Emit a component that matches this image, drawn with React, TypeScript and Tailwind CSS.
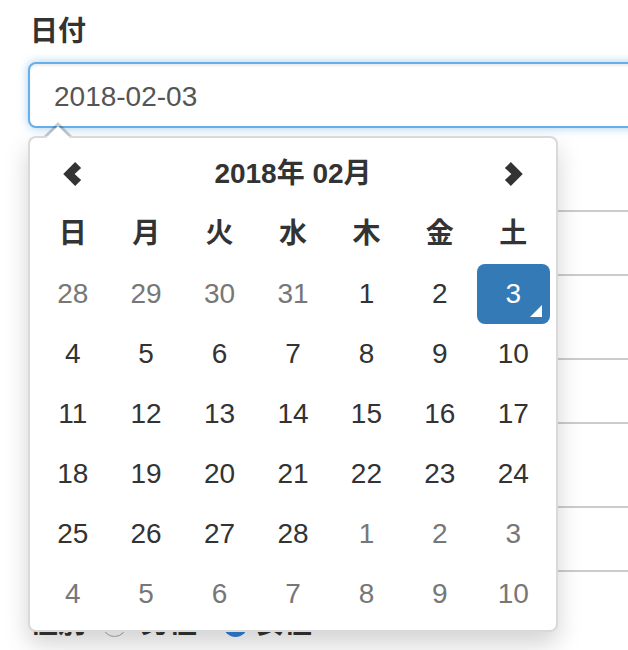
import React from "react";

type Day = { n: number; muted?: boolean; active?: boolean };

const weekdays = ["日", "月", "火", "水", "木", "金", "土"];

function buildDays(): Day[] {
    const days: Day[] = [];
    [28, 29, 30, 31].forEach((n) => days.push({ n, muted: true }));
    for (let n = 1; n <= 28; n++) days.push({ n, active: n === 3 });
    for (let n = 1; n <= 10; n++) days.push({ n, muted: true });
    return days;
}

function Chevron({ dir }: { dir: "left" | "right" }) {
    return (
        <svg
            width="22"
            height="26"
            viewBox="0 0 20 24"
            className={dir === "right" ? "-scale-x-100" : ""}
        >
            <polygon points="12,1 17.5,6.5 11.5,12 17.5,17.5 12,23 1,12" fill="#333333" />
        </svg>
    );
}

function FieldGroup({ children }: { children?: React.ReactNode }) {
    return (
        <div className="mb-[32px]">
            <div className="h-[40px] mb-[10px] text-[28px] leading-[40px] font-bold text-[#333]">
                {children}
            </div>
            <div className="h-[66px] w-[700px] rounded-[8px] border-2 border-[#cccccc] bg-white" />
        </div>
    );
}

function DatePicker() {
    const days = buildDays();
    return (
        <div className="absolute left-[28px] top-[136px] w-[530px] rounded-[8px] border-2 border-[rgba(0,0,0,0.15)] bg-white p-[6px] shadow-[0_12px_24px_rgba(0,0,0,0.175)]">
            {/* caret */}
            <div className="absolute -top-[16px] left-[14px] h-0 w-0 border-x-[14px] border-b-[14px] border-x-transparent border-b-[rgba(0,0,0,0.2)]" />
            <div className="absolute -top-[12px] left-[16px] h-0 w-0 border-x-[12px] border-b-[12px] border-x-transparent border-b-white" />

            <div className="grid grid-cols-7 text-[#333]">
                <div className="h-[60px] flex items-center justify-center">
                    <Chevron dir="left" />
                </div>
                <div className="col-span-5 h-[60px] flex items-center justify-center text-[28px] font-bold">
                    2018年 02月
                </div>
                <div className="h-[60px] flex items-center justify-center">
                    <Chevron dir="right" />
                </div>

                {weekdays.map((w) => (
                    <div key={w} className="h-[60px] flex items-center justify-center text-[28px] font-bold">
                        {w}
                    </div>
                ))}

                {days.map((d, i) => (
                    <div
                        key={i}
                        className={`relative h-[60px] flex items-center justify-center rounded-[8px] text-[28px] ${
                            d.active
                                ? "bg-[#337ab7] text-white"
                                : d.muted
                                ? "text-[#777777]"
                                : "text-[#333333]"
                        }`}
                    >
                        {d.n}
                        {d.active && (
                            <span className="absolute bottom-[7px] right-[8px] h-0 w-0 border-l-[12px] border-b-[12px] border-l-transparent border-b-white" />
                        )}
                    </div>
                ))}
            </div>
        </div>
    );
}

export default function App() {
    return (
        <div className="relative h-[650px] w-[628px] overflow-hidden bg-white pl-[28px] pt-[12px] font-['Liberation_Sans','Noto_Sans_CJK_JP',sans-serif]">
            <div className="mb-[32px]">
                <div className="h-[40px] mb-[10px] pl-[2px] text-[28px] leading-[40px] font-bold text-[#333]">
                    日付
                </div>
                <div className="flex h-[66px] w-[700px] items-center rounded-[8px] border-2 border-[#66afe9] bg-white pl-[24px] pt-[3px] text-[28px] text-[#555555] shadow-[inset_0_2px_2px_rgba(0,0,0,0.075),0_0_10px_rgba(102,175,233,0.6)]">
                    2018-02-03
                </div>
            </div>
            <FieldGroup />
            <FieldGroup />
            <FieldGroup />

            <div className="flex h-[40px] items-center text-[28px] font-bold text-[#333]">
                <span className="pl-[2px]">性別</span>
                <span className="ml-[16px] h-[25px] w-[25px] rounded-full border border-[#aaaaaa] bg-white" />
                <span className="ml-[14px]">男性</span>
                <span className="ml-[26px] h-[25px] w-[25px] rounded-full bg-[#2f80d9]" />
                <span className="ml-[8px]">女性</span>
            </div>

            <DatePicker />
        </div>
    );
}
